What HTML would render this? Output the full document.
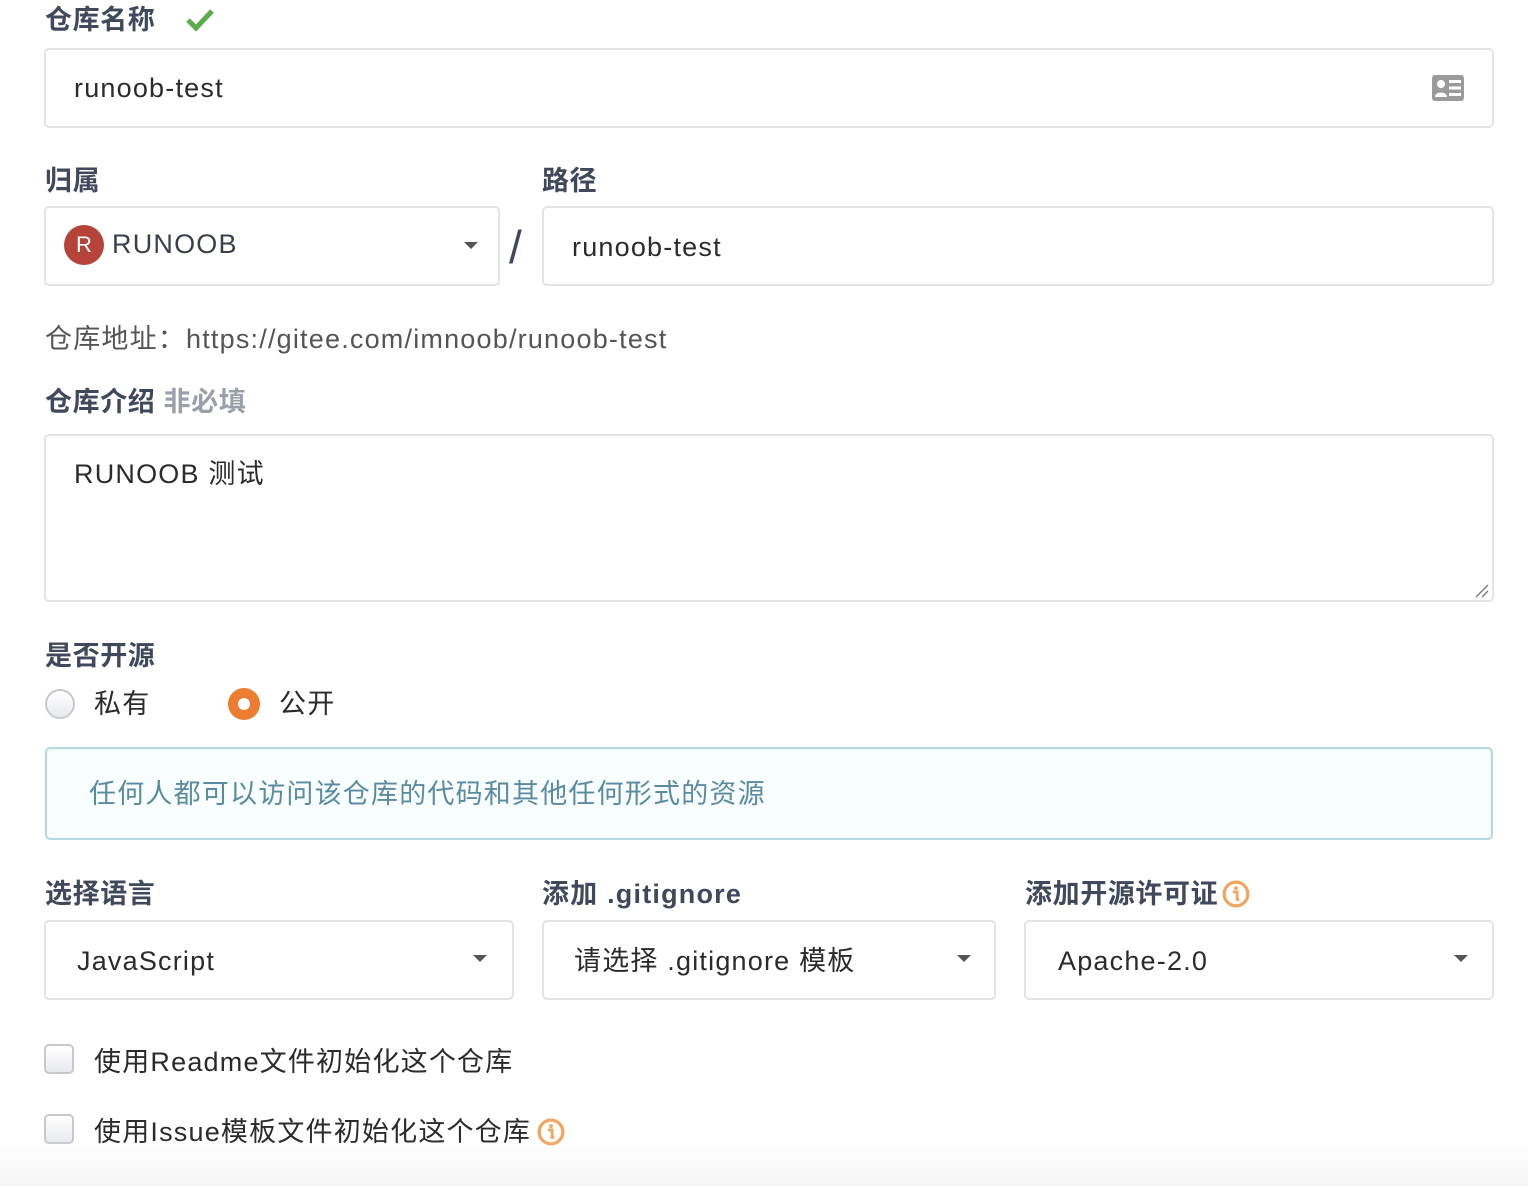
<!DOCTYPE html>
<html><head><meta charset="utf-8"><style>
body{margin:0;width:1528px;height:1186px;background:#fff;position:relative;overflow:hidden;font-family:"Liberation Sans","Noto Sans CJK SC",sans-serif;}
.a{position:absolute;white-space:nowrap;}
.lbl{font-size:27px;font-weight:bold;color:#40485b;height:40px;line-height:40px;letter-spacing:0.6px;}
.txt{font-size:27px;color:#2b2b2b;height:40px;line-height:40px;letter-spacing:1.2px;}
.box{position:absolute;border:2px solid #e1e4e8;border-radius:5px;box-sizing:border-box;background:#fff;}
.arr{position:absolute;width:0;height:0;border-left:7px solid transparent;border-right:7px solid transparent;border-top:7px solid #555;}
.cb{position:absolute;width:30px;height:30px;border:2px solid #c8c9cc;border-radius:5px;box-sizing:border-box;background:linear-gradient(#fff,#e9eaee);}
.info{display:inline-block;vertical-align:-5px;width:28px;height:28px;margin-left:6px;}
</style></head><body>
<div class="a lbl" style="left:45px;top:0px;">仓库名称</div>
<svg class="a" style="left:185px;top:8px" width="30" height="24" viewBox="0 0 30 24"><path d="M3 12l8 8L27 3" stroke="#5cad4a" stroke-width="5" fill="none"/></svg>
<div class="box" style="left:44px;top:48px;width:1450px;height:80px;"></div>
<div class="a txt" style="left:74px;top:68px;">runoob-test</div>
<svg class="a" style="left:1432px;top:75px" width="32" height="26" viewBox="0 0 32 26"><rect x="0" y="0" width="32" height="26" rx="3" fill="#9b9b9b"/><circle cx="9" cy="9" r="4" fill="#fff"/><path d="M3 22c0-6 12-6 12 0z" fill="#fff"/><rect x="17" y="5" width="12" height="3" fill="#fff"/><rect x="17" y="11.5" width="12" height="3" fill="#fff"/><rect x="17" y="18" width="12" height="3" fill="#fff"/></svg>

<div class="a lbl" style="left:45px;top:161px;">归属</div>
<div class="a lbl" style="left:542px;top:161px;">路径</div>
<div class="box" style="left:44px;top:206px;width:456px;height:80px;"></div>
<div class="a" style="left:64px;top:225px;width:40px;height:40px;border-radius:50%;background:#b5433a;color:#fff;font-size:22px;line-height:40px;text-align:center;">R</div>
<div class="a txt" style="left:112px;top:224px;color:#3a3f4b;">RUNOOB</div>
<div class="arr" style="left:464px;top:242px;"></div>
<div class="a" style="left:509px;top:222px;font-size:46px;color:#40485b;line-height:50px;">/</div>
<div class="box" style="left:542px;top:206px;width:952px;height:80px;"></div>
<div class="a txt" style="left:572px;top:227px;">runoob-test</div>

<div class="a txt" style="left:45px;top:319px;color:#555;">仓库地址：https://gitee.com/imnoob/runoob-test</div>
<div class="a lbl" style="left:45px;top:382px;">仓库介绍 <span style="color:#9aa0ab">非必填</span></div>
<div class="box" style="left:44px;top:434px;width:1450px;height:168px;"></div>
<div class="a txt" style="left:74px;top:454px;">RUNOOB 测试</div>
<svg class="a" style="left:1474px;top:583px" width="16" height="16"><path d="M2 14L14 2M8 14L14 8" stroke="#777" stroke-width="1.3"/></svg>

<div class="a lbl" style="left:45px;top:636px;">是否开源</div>
<div class="a" style="left:45px;top:689px;width:30px;height:30px;border-radius:50%;border:2px solid #c8c9cc;box-sizing:border-box;background:linear-gradient(#fff,#e9eaee);"></div>
<div class="a txt" style="left:94px;top:684px;">私有</div>
<div class="a" style="left:228px;top:688px;width:32px;height:32px;border-radius:50%;background:#ee7d31;"></div>
<div class="a" style="left:238px;top:698px;width:12px;height:12px;border-radius:50%;background:#fff;"></div>
<div class="a txt" style="left:279px;top:684px;">公开</div>

<div class="a" style="left:45px;top:747px;width:1448px;height:93px;border:2px solid #b6d8e0;border-radius:5px;box-sizing:border-box;background:#f8fdfe;box-shadow:inset 0 1px 2px rgba(0,0,0,.05);"></div>
<div class="a txt" style="left:89px;top:774px;color:#5b8ba0;">任何人都可以访问该仓库的代码和其他任何形式的资源</div>

<div class="a lbl" style="left:45px;top:874px;">选择语言</div>
<div class="a lbl" style="left:542px;top:874px;letter-spacing:1.2px;">添加 .gitignore</div>
<div class="a lbl" style="left:1025px;top:874px;">添加开源许可证<svg class="info" style="margin-left:4px" viewBox="0 0 26 26"><circle cx="13" cy="13" r="11" stroke="#efa660" stroke-width="3" fill="none"/><circle cx="13" cy="7.5" r="1.8" fill="#efa660"/><path d="M10 11h4v7h2" stroke="#efa660" stroke-width="2.6" fill="none"/></svg></div>
<div class="box" style="left:44px;top:920px;width:470px;height:80px;"></div>
<div class="a txt" style="left:77px;top:941px;">JavaScript</div>
<div class="arr" style="left:473px;top:955px;"></div>
<div class="box" style="left:542px;top:920px;width:454px;height:80px;"></div>
<div class="a txt" style="left:574px;top:941px;">请选择 .gitignore 模板</div>
<div class="arr" style="left:957px;top:955px;"></div>
<div class="box" style="left:1024px;top:920px;width:470px;height:80px;"></div>
<div class="a txt" style="left:1058px;top:941px;">Apache-2.0</div>
<div class="arr" style="left:1454px;top:955px;"></div>

<div class="cb" style="left:44px;top:1044px;"></div>
<div class="a txt" style="left:94px;top:1042px;">使用Readme文件初始化这个仓库</div>
<div class="cb" style="left:44px;top:1114px;"></div>
<div class="a txt" style="left:94px;top:1112px;">使用Issue模板文件初始化这个仓库<svg class="info" viewBox="0 0 26 26"><circle cx="13" cy="13" r="11" stroke="#efa660" stroke-width="3" fill="none"/><circle cx="13" cy="7.5" r="1.8" fill="#efa660"/><path d="M10 11h4v7h2" stroke="#efa660" stroke-width="2.6" fill="none"/></svg></div>
<div class="a" style="left:0;top:1140px;width:1528px;height:46px;background:linear-gradient(rgba(245,245,245,0),#f5f5f5);pointer-events:none;"></div>
</body></html>
